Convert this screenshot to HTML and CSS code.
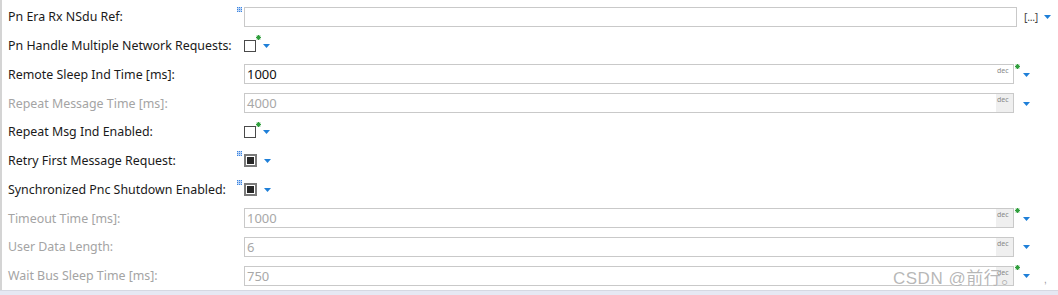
FILE: index.html
```html
<!DOCTYPE html>
<html>
<head>
<meta charset="utf-8">
<link rel="stylesheet" href="styles.css">
</head>
<body>
<div class="page">
  <div class="form">
    <div class="row">
      <div class="label">Pn Era Rx NSdu Ref:</div>
      <div class="field">
        <span class="mark"><svg width="5" height="5" viewBox="0 0 5 5"><rect x="0" y="0" width="5" height="5" fill="#b9d3f5"/><rect x="0" y="0" width="1" height="1" fill="#3b84e0"/><rect x="2" y="0" width="1" height="1" fill="#3b84e0"/><rect x="4" y="0" width="1" height="1" fill="#3b84e0"/><rect x="0" y="2" width="1" height="1" fill="#3b84e0"/><rect x="2" y="2" width="1" height="1" fill="#3b84e0"/><rect x="4" y="2" width="1" height="1" fill="#3b84e0"/><rect x="0" y="4" width="1" height="1" fill="#3b84e0"/><rect x="2" y="4" width="1" height="1" fill="#3b84e0"/><rect x="4" y="4" width="1" height="1" fill="#3b84e0"/></svg></span>
        <div class="input input-ref"></div>
        <div class="trail trail-ref"><span class="dots">[...]</span><svg class="arrow" width="7" height="4" viewBox="0 0 7 4"><path d="M0 0H7L3.5 4Z" fill="#1e7fd8"/></svg></div>
      </div>
    </div>

    <div class="row">
      <div class="label">Pn Handle Multiple Network Requests:</div>
      <div class="field">
        <span class="mark"></span>
        <span class="check"></span>
        <span class="star-slot"><svg width="5" height="5" viewBox="0 0 5 5"><path d="M2.5 0V5M0 2.5H5M0.7 0.7L4.3 4.3M4.3 0.7L0.7 4.3" stroke="#2f9e3c" stroke-width="1.1"/></svg></span>
        <svg class="arrow arrow-check" width="7" height="4" viewBox="0 0 7 4"><path d="M0 0H7L3.5 4Z" fill="#1e7fd8"/></svg>
      </div>
    </div>

    <div class="row">
      <div class="label">Remote Sleep Ind Time [ms]:</div>
      <div class="field">
        <span class="mark"></span>
        <div class="input"><span class="val">1000</span><span class="dec">dec</span></div>
        <div class="trail trail-dec"><span class="star"><svg width="5" height="5" viewBox="0 0 5 5"><path d="M2.5 0V5M0 2.5H5M0.7 0.7L4.3 4.3M4.3 0.7L0.7 4.3" stroke="#2f9e3c" stroke-width="1.1"/></svg></span><svg class="arrow" width="7" height="4" viewBox="0 0 7 4"><path d="M0 0H7L3.5 4Z" fill="#1e7fd8"/></svg></div>
      </div>
    </div>

    <div class="row disabled">
      <div class="label">Repeat Message Time [ms]:</div>
      <div class="field">
        <span class="mark"></span>
        <div class="input"><span class="val">4000</span><span class="dec">dec</span></div>
        <div class="trail trail-dec"><span class="star"></span><svg class="arrow" width="7" height="4" viewBox="0 0 7 4"><path d="M0 0H7L3.5 4Z" fill="#1e7fd8"/></svg></div>
      </div>
    </div>

    <div class="row">
      <div class="label">Repeat Msg Ind Enabled:</div>
      <div class="field">
        <span class="mark"></span>
        <span class="check"></span>
        <span class="star-slot"><svg width="5" height="5" viewBox="0 0 5 5"><path d="M2.5 0V5M0 2.5H5M0.7 0.7L4.3 4.3M4.3 0.7L0.7 4.3" stroke="#2f9e3c" stroke-width="1.1"/></svg></span>
        <svg class="arrow arrow-check" width="7" height="4" viewBox="0 0 7 4"><path d="M0 0H7L3.5 4Z" fill="#1e7fd8"/></svg>
      </div>
    </div>

    <div class="row">
      <div class="label">Retry First Message Request:</div>
      <div class="field">
        <span class="mark mark-up"><svg width="5" height="5" viewBox="0 0 5 5"><rect x="0" y="0" width="5" height="5" fill="#b9d3f5"/><rect x="0" y="0" width="1" height="1" fill="#3b84e0"/><rect x="2" y="0" width="1" height="1" fill="#3b84e0"/><rect x="4" y="0" width="1" height="1" fill="#3b84e0"/><rect x="0" y="2" width="1" height="1" fill="#3b84e0"/><rect x="2" y="2" width="1" height="1" fill="#3b84e0"/><rect x="4" y="2" width="1" height="1" fill="#3b84e0"/><rect x="0" y="4" width="1" height="1" fill="#3b84e0"/><rect x="2" y="4" width="1" height="1" fill="#3b84e0"/><rect x="4" y="4" width="1" height="1" fill="#3b84e0"/></svg></span>
        <span class="check checked"><span class="fill"></span></span>
        <span class="star-slot"></span>
        <svg class="arrow arrow-check" width="7" height="4" viewBox="0 0 7 4"><path d="M0 0H7L3.5 4Z" fill="#1e7fd8"/></svg>
      </div>
    </div>

    <div class="row">
      <div class="label">Synchronized Pnc Shutdown Enabled:</div>
      <div class="field">
        <span class="mark mark-up"><svg width="5" height="5" viewBox="0 0 5 5"><rect x="0" y="0" width="5" height="5" fill="#b9d3f5"/><rect x="0" y="0" width="1" height="1" fill="#3b84e0"/><rect x="2" y="0" width="1" height="1" fill="#3b84e0"/><rect x="4" y="0" width="1" height="1" fill="#3b84e0"/><rect x="0" y="2" width="1" height="1" fill="#3b84e0"/><rect x="2" y="2" width="1" height="1" fill="#3b84e0"/><rect x="4" y="2" width="1" height="1" fill="#3b84e0"/><rect x="0" y="4" width="1" height="1" fill="#3b84e0"/><rect x="2" y="4" width="1" height="1" fill="#3b84e0"/><rect x="4" y="4" width="1" height="1" fill="#3b84e0"/></svg></span>
        <span class="check checked"><span class="fill"></span></span>
        <span class="star-slot"></span>
        <svg class="arrow arrow-check" width="7" height="4" viewBox="0 0 7 4"><path d="M0 0H7L3.5 4Z" fill="#1e7fd8"/></svg>
      </div>
    </div>

    <div class="row disabled">
      <div class="label">Timeout Time [ms]:</div>
      <div class="field">
        <span class="mark"></span>
        <div class="input"><span class="val">1000</span><span class="dec">dec</span></div>
        <div class="trail trail-dec"><span class="star"><svg width="5" height="5" viewBox="0 0 5 5"><path d="M2.5 0V5M0 2.5H5M0.7 0.7L4.3 4.3M4.3 0.7L0.7 4.3" stroke="#2f9e3c" stroke-width="1.1"/></svg></span><svg class="arrow" width="7" height="4" viewBox="0 0 7 4"><path d="M0 0H7L3.5 4Z" fill="#1e7fd8"/></svg></div>
      </div>
    </div>

    <div class="row disabled">
      <div class="label">User Data Length:</div>
      <div class="field">
        <span class="mark"></span>
        <div class="input"><span class="val">6</span><span class="dec">dec</span></div>
        <div class="trail trail-dec"><span class="star"></span><svg class="arrow" width="7" height="4" viewBox="0 0 7 4"><path d="M0 0H7L3.5 4Z" fill="#1e7fd8"/></svg></div>
      </div>
    </div>

    <div class="row disabled">
      <div class="label">Wait Bus Sleep Time [ms]:</div>
      <div class="field">
        <span class="mark"></span>
        <div class="input"><span class="val">750</span><span class="dec">dec</span></div>
        <div class="trail trail-dec"><span class="star"><svg width="5" height="5" viewBox="0 0 5 5"><path d="M2.5 0V5M0 2.5H5M0.7 0.7L4.3 4.3M4.3 0.7L0.7 4.3" stroke="#2f9e3c" stroke-width="1.1"/></svg></span><svg class="arrow" width="7" height="4" viewBox="0 0 7 4"><path d="M0 0H7L3.5 4Z" fill="#1e7fd8"/></svg></div>
      </div>
    </div>
  </div>
  <div class="footer"></div>
  <div class="watermark">CSDN @前行。</div>
  <div class="tick">,</div>
</div>
</body>
</html>
```

FILE: styles.css
```css
html, body {
  margin: 0;
  padding: 0;
  background: #ffffff;
}
body {
  width: 1058px;
  height: 295px;
  overflow: hidden;
  font-family: "Noto Sans", "Open Sans", "Liberation Sans", sans-serif;
}
.page {
  position: relative;
  width: 1058px;
  height: 295px;
  display: flex;
  flex-direction: column;
}
.form {
  flex: 1;
  border-left: 2px solid #d4d4d4;
  padding-top: 2.5px;
  padding-left: 6px;
}
.row {
  height: 28.75px;
  display: flex;
  align-items: center;
}
.label {
  width: 229px;
  font-size: 12.4px;
  color: #1a1a1a;
  white-space: nowrap;
}
.row.disabled .label {
  color: #a4a4a4;
}
.field {
  flex: 1;
  display: flex;
  align-items: center;
  height: 100%;
}
.mark {
  width: 7px;
  align-self: flex-start;
  padding-top: 4px;
  display: flex;
}
.mark-up {
  padding-top: 5px;
}
.input {
  flex: 1;
  height: 18px;
  border: 1px solid #c9c9c9;
  background: #fff;
  display: flex;
  align-items: stretch;
  justify-content: space-between;
}
.val {
  font-size: 13px;
  line-height: 18px;
  padding-left: 2px;
  color: #111;
}
.row.disabled .val {
  color: #a8a8a8;
}
.dec {
  width: 16px;
  font-size: 7px;
  line-height: 12px;
  color: #888;
  text-align: left;
  padding-left: 1px;
}
.row.disabled .dec {
  background: #efefef;
}
.trail {
  display: flex;
  align-items: center;
  height: 100%;
}
.trail-ref {
  width: 41px;
  padding-left: 7px;
  box-sizing: border-box;
  gap: 6px;
}
.dots {
  font-size: 10.5px;
  color: #444;
  letter-spacing: -0.3px;
}
.trail-dec {
  width: 44px;
  box-sizing: border-box;
  padding-left: 1px;
}
.star, .star-slot {
  width: 7px;
  align-self: flex-start;
  padding-top: 4px;
  display: flex;
}
.trail-dec .arrow {
  margin-left: 1px;
  margin-top: 1px;
}
.check {
  width: 10px;
  height: 10px;
  border: 1px solid #4a4a4a;
  background: #fff;
  display: flex;
  align-items: center;
  justify-content: center;
}
.check.checked {
  width: 9px;
  height: 9px;
  border: 2px solid #7a7a7a;
}
.check .fill {
  width: 7px;
  height: 7px;
  background: #262626;
}
.arrow-check {
  margin-left: 0px;
  margin-top: 1px;
}
.footer {
  height: 4px;
  background: #e6e8f3;
  border-top: 1px solid #d6d8e2;
}
.watermark {
  position: absolute;
  left: 893px;
  top: 264px;
  font-size: 17px;
  font-family: "Liberation Sans", "Noto Sans CJK SC", sans-serif;
  color: rgba(160, 160, 160, 0.75);
  letter-spacing: 0.5px;
  text-shadow: 0 0 1px #fff;
  white-space: nowrap;
}
.tick {
  position: absolute;
  left: 1044px;
  top: 274px;
  font-size: 10px;
  color: #999;
  font-family: "Liberation Sans", sans-serif;
}
```
